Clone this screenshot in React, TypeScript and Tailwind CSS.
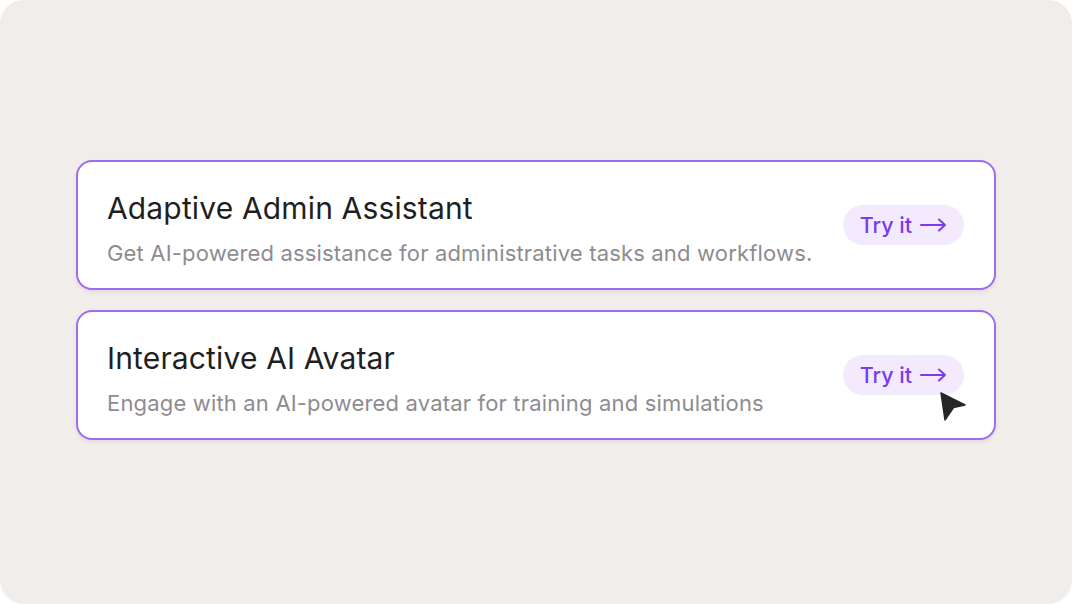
import React from "react";

const cards = [
  {
    title: "Adaptive Admin Assistant",
    desc: "Get AI-powered assistance for administrative tasks and workflows.",
    cursor: false,
  },
  {
    title: "Interactive AI Avatar",
    desc: "Engage with an AI-powered avatar for training and simulations",
    cursor: true,
  },
];

function Arrow() {
  return (
    <svg width="27" height="14" viewBox="0 0 27 14" fill="none" className="ml-[8px]">
      <path d="M1 7H25M19 1.5L25 7L19 12.5" stroke="#7c3aed" strokeWidth="2" strokeLinecap="round" strokeLinejoin="round" />
    </svg>
  );
}

export default function App() {
  return (
    <div className="w-[1072px] h-[604px] bg-white" style={{ fontFamily: "Inter, 'Noto Sans', sans-serif" }}>
      <div className="w-full h-full rounded-[24px] bg-[#f1edea] flex flex-col items-center justify-center gap-[20px] pb-[4px]">
        {cards.map((c) => (
          <div
            key={c.title}
            className="w-[920px] h-[130px] shrink-0 bg-white border-2 border-[#9d6cf2] rounded-[16px] shadow-[0_2px_4px_rgba(0,0,0,0.08)] flex items-center justify-between pl-[29px] pr-[30px]"
          >
            <div className="flex flex-col mt-[6px]">
              <div className="text-[30px] leading-[36px] text-[#1f1f1f] tracking-[0.15px]">{c.title}</div>
              <div className="text-[22px] leading-[28px] text-[#8e8c91] mt-[13px] tracking-[0.17px]">{c.desc}</div>
            </div>
            <div className="relative">
              <div className="h-[40px] rounded-full bg-[#f3ebfd] px-[17px] flex items-center text-[21.5px] font-medium text-[#7c3aed]">
                Try it
                <Arrow />
              </div>
              {c.cursor && (
                <svg
                  width="28"
                  height="30"
                  viewBox="0 0 28 30"
                  className="absolute left-[96px] top-[36px]"
                >
                  <path d="M2 2L26 14L14.5 16.5L6 29Z" fill="#262626" stroke="#262626" strokeWidth="1.5" strokeLinejoin="round" />
                </svg>
              )}
            </div>
          </div>
        ))}
      </div>
    </div>
  );
}
